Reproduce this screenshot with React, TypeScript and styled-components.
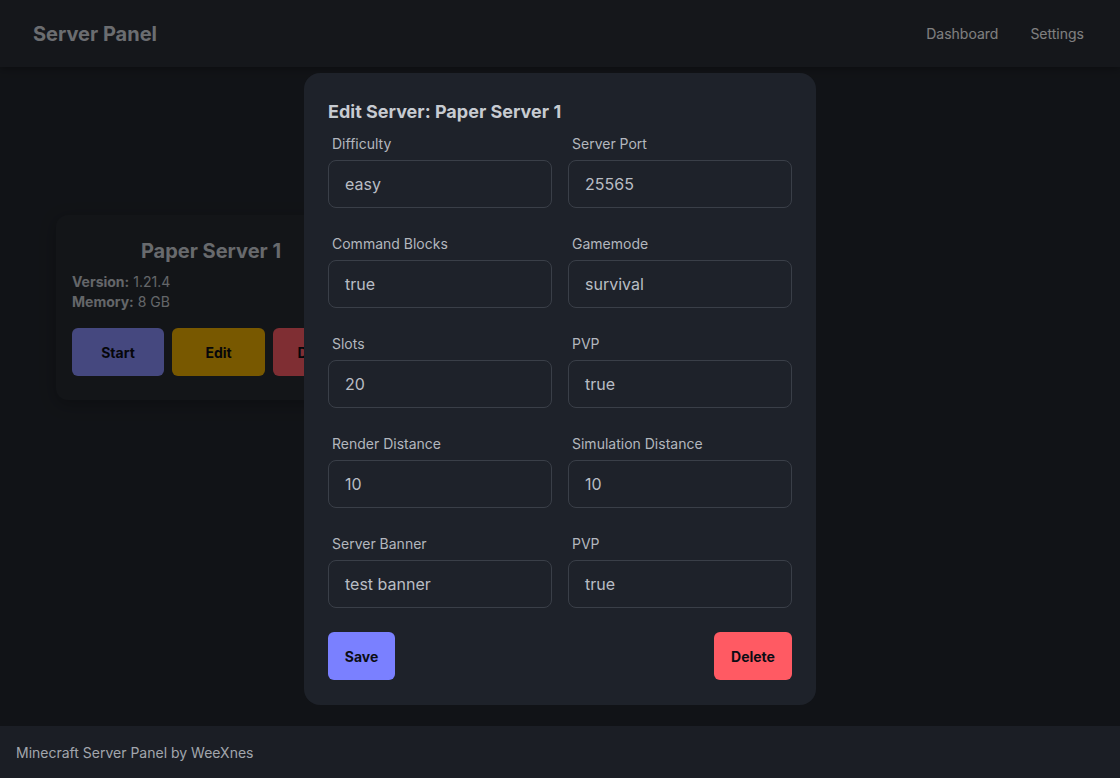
import React from "react";
import styled, { createGlobalStyle } from "styled-components";

const Global = createGlobalStyle`
  html, body { margin: 0; padding: 0; background: #23272e; }
  body { font-family: Inter, "Noto Sans", sans-serif; }
  * { box-sizing: border-box; }
`;

const Page = styled.div`
  min-height: 778px;
  display: flex;
  flex-direction: column;
  position: relative;
`;

const Header = styled.header`
  height: 67px;
  background: #2a2e36;
  display: flex;
  align-items: center;
  justify-content: space-between;
  padding: 0 36px 0 33px;
  box-shadow: 0 2px 8px rgba(0, 0, 0, 0.3);
`;

const Brand = styled.div`
  font-size: 20px;
  font-weight: 700;
  color: #d6dae0;
`;

const Nav = styled.nav`
  display: flex;
  gap: 32px;
  font-size: 14px;
  color: #ffffff;
`;

const Main = styled.main`
  flex: 1;
  padding: 148px 56px 0;
`;

const Card = styled.div`
  width: 340px;
  background: #262a31;
  border-radius: 12px;
  padding: 24px 16px 24px;
  box-shadow: 0 4px 16px rgba(0, 0, 0, 0.25);
`;

const CardTitle = styled.h2`
  margin: 0 0 9px;
  text-align: center;
  font-size: 20px;
  font-weight: 700;
  color: #d0d4da;
  padding-right: 30px;
`;

const Info = styled.div`
  font-size: 14px;
  line-height: 20px;
  color: #c9cdd3;
  b { font-weight: 700; }
`;

const Actions = styled.div`
  display: flex;
  gap: 8px;
  margin-top: 16px;
`;

const Btn = styled.button<{ $bg: string; $w: number }>`
  flex: none;
  width: ${(p) => p.$w}px;
  height: 48px;
  border: none;
  border-radius: 6px;
  background: ${(p) => p.$bg};
  color: #0c0d14;
  font-family: inherit;
  font-size: 14px;
  font-weight: 700;
`;

const Footer = styled.footer`
  height: 52px;
  background: #1b1e25;
  display: flex;
  align-items: center;
  padding: 0 16px;
  font-size: 14px;
  color: #a2a6ad;
`;

const Overlay = styled.div`
  position: absolute;
  left: 0;
  right: 0;
  top: 0;
  bottom: 52px;
  background: rgba(0, 0, 0, 0.5);
  display: flex;
  justify-content: center;
  padding-top: 73px;
`;

const Modal = styled.div`
  width: 512px;
  height: 632px;
  background: #1e222a;
  border-radius: 16px;
  padding: 28px 24px 24px;
`;

const ModalTitle = styled.h3`
  margin: 0 0 13px;
  font-size: 18px;
  font-weight: 700;
  color: #c7cbd1;
`;

const Grid = styled.div`
  display: grid;
  grid-template-columns: 224px 224px;
  column-gap: 16px;
  row-gap: 27px;
`;

const Field = styled.div`
  display: flex;
  flex-direction: column;
  gap: 8px;
`;

const Label = styled.label`
  font-size: 14px;
  line-height: 17px;
  color: #b3b7be;
  padding-left: 4px;
`;

const Input = styled.div`
  height: 48px;
  border: 1px solid #3a3f48;
  border-radius: 8px;
  padding: 0 16px;
  display: flex;
  align-items: center;
  font-size: 16px;
  color: #b9bdc4;
`;

const Footerbar = styled.div`
  display: flex;
  justify-content: space-between;
  margin-top: 24px;
`;

const fields: [string, string][] = [
  ["Difficulty", "easy"],
  ["Server Port", "25565"],
  ["Command Blocks", "true"],
  ["Gamemode", "survival"],
  ["Slots", "20"],
  ["PVP", "true"],
  ["Render Distance", "10"],
  ["Simulation Distance", "10"],
  ["Server Banner", "test banner"],
  ["PVP", "true"],
];

export default function App() {
  return (
    <Page>
      <Global />
      <Header>
        <Brand>Server Panel</Brand>
        <Nav>
          <span>Dashboard</span>
          <span>Settings</span>
        </Nav>
      </Header>
      <Main>
        <Card>
          <CardTitle>Paper Server 1</CardTitle>
          <Info>
            <div><b>Version:</b> 1.21.4</div>
            <div><b>Memory:</b> 8 GB</div>
          </Info>
          <Actions>
            <Btn $bg="#8b91ff" $w={92}>Start</Btn>
            <Btn $bg="#f0b100" $w={93}>Edit</Btn>
            <Btn $bg="#ff5c66" $w={93}>Delete</Btn>
          </Actions>
        </Card>
      </Main>
      <Footer>Minecraft Server Panel by WeeXnes</Footer>
      <Overlay>
        <Modal>
          <ModalTitle>Edit Server: Paper Server 1</ModalTitle>
          <Grid>
            {fields.map(([l, v], i) => (
              <Field key={i}>
                <Label>{l}</Label>
                <Input>{v}</Input>
              </Field>
            ))}
          </Grid>
          <Footerbar>
            <Btn $bg="#7a80ff" $w={67}>Save</Btn>
            <Btn $bg="#ff5a63" $w={78}>Delete</Btn>
          </Footerbar>
        </Modal>
      </Overlay>
    </Page>
  );
}
